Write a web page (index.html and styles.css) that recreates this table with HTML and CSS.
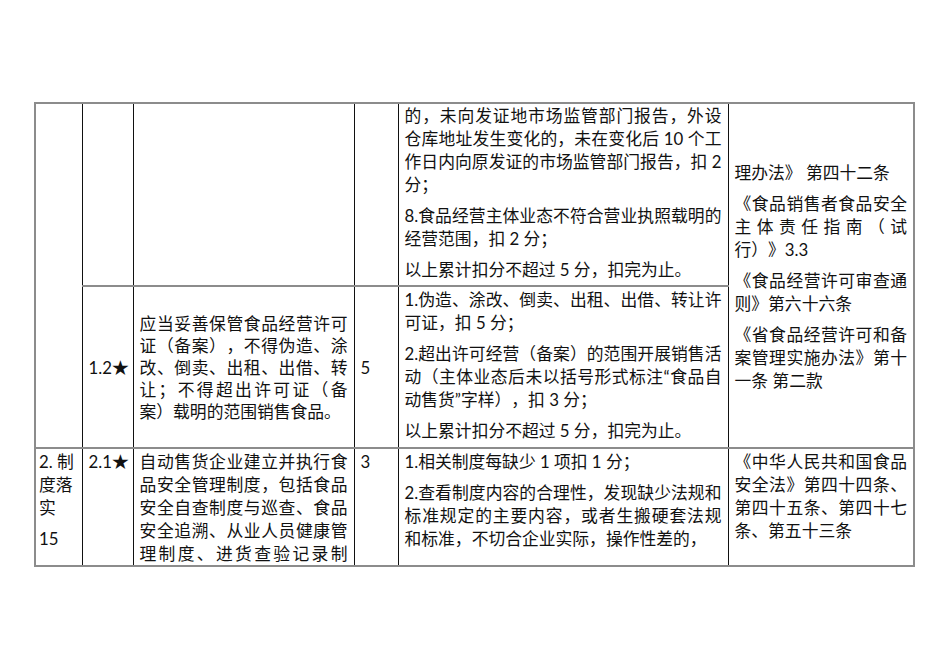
FILE: index.html
```html
<!DOCTYPE html>
<html lang="zh-CN">
<head>
<meta charset="utf-8">
<title>食品自动售货检查表</title>
<link rel="stylesheet" href="styles.css">
</head>
<body>
<div class="page">
<table class="grid">
  <colgroup>
    <col class="w-cat">
    <col class="w-no">
    <col class="w-req">
    <col class="w-score">
    <col class="w-rule">
    <col class="w-basis">
  </colgroup>
  <tbody>
    <tr class="r1">
      <td class="cat" rowspan="2"></td>
      <td class="no"></td>
      <td class="req"></td>
      <td class="score"></td>
      <td class="rule">
        <p>的，未向发证地市场监管部门报告，外设仓库地址发生变化的，未在变化后 10 个工作日内向原发证的市场监管部门报告，扣 2 分；</p>
        <p>8.食品经营主体业态不符合营业执照载明的经营范围，扣 2 分；</p>
        <p>以上累计扣分不超过 5 分，扣完为止。</p>
      </td>
      <td class="basis mid" rowspan="2">
        <p>理办法》 第四十二条</p>
        <p>《食品销售者食品安全主体责任指南（试行）》3.3</p>
        <p>《食品经营许可审查通则》第六十六条</p>
        <p>《省食品经营许可和备案管理实施办法》第十一条 第二款</p>
      </td>
    </tr>
    <tr class="r2">
      <td class="no mid">1.2★</td>
      <td class="req mid tight"><p>应当妥善保管食品经营许可证（备案），不得伪造、涂改、倒卖、出租、出借、转让；不得超出许可证（备案）载明的范围销售食品。</p></td>
      <td class="score mid">5</td>
      <td class="rule">
        <p>1.伪造、涂改、倒卖、出租、出借、转让许可证，扣 5 分；</p>
        <p>2.超出许可经营（备案）的范围开展销售活动（主体业态后未以括号形式标注“食品自动售货”字样），扣 3 分；</p>
        <p>以上累计扣分不超过 5 分，扣完为止。</p>
      </td>
    </tr>
    <tr class="r3">
      <td class="cat">
        <p>2. 制度落实</p>
        <p>15</p>
      </td>
      <td class="no">2.1★</td>
      <td class="req"><p class="cont">自动售货企业建立并执行食品安全管理制度，包括食品安全自查制度与巡查、食品安全追溯、从业人员健康管理制度、进货查验记录制</p></td>
      <td class="score">3</td>
      <td class="rule">
        <p>1.相关制度每缺少 1 项扣 1 分；</p>
        <p>2.查看制度内容的合理性，发现缺少法规和标准规定的主要内容，或者生搬硬套法规和标准，不切合企业实际，操作性差的，</p>
      </td>
      <td class="basis">
        <p>《中华人民共和国食品安全法》第四十四条、第四十五条、第四十七条、第五十三条</p>
      </td>
    </tr>
  </tbody>
</table>
</div>
</body>
</html>
```

FILE: styles.css
```css
html, body {
  margin: 0;
  padding: 0;
  background: #ffffff;
}

body {
  font-family: "Lato", "Noto Sans CJK SC", sans-serif;
  font-size: 16.8px;
  color: #111111;
  text-spacing-trim: space-all;
}

.page {
  padding: 102px 0 0 34px;
}

.grid {
  border-collapse: collapse;
  table-layout: fixed;
  width: 879px;
}

.w-cat { width: 47px; }
.w-no { width: 51px; }
.w-req { width: 221px; }
.w-score { width: 44px; }
.w-rule { width: 330px; }
.w-basis { width: 186px; }

.grid td {
  border-left: 1px solid #111111;
  border-right: 1px solid #111111;
  border-top: 2px solid #8c8c8c;
  border-bottom: 2px solid #8c8c8c;
  padding: 1px 6px 0 6px;
  vertical-align: top;
  line-height: 23px;
  text-align: justify;
  text-spacing-trim: space-all;
}

.grid td.cat {
  border-left: 2px solid #8c8c8c;
  padding-left: 3px;
  padding-right: 4px;
  text-align: left;
}

.grid td.basis {
  border-right: 2px solid #8c8c8c;
}

.grid td.mid {
  vertical-align: middle;
}

.grid td.tight {
  line-height: 22px;
}

.grid p {
  margin: 0;
}

.grid p + p {
  margin-top: 8px;
}

.r1 { height: 183px; }
.r2 { height: 162px; }
.r3 { height: 117px; }

.r1 .rule {
  padding-top: 0;
}

.cont {
  text-align-last: justify;
}
```
